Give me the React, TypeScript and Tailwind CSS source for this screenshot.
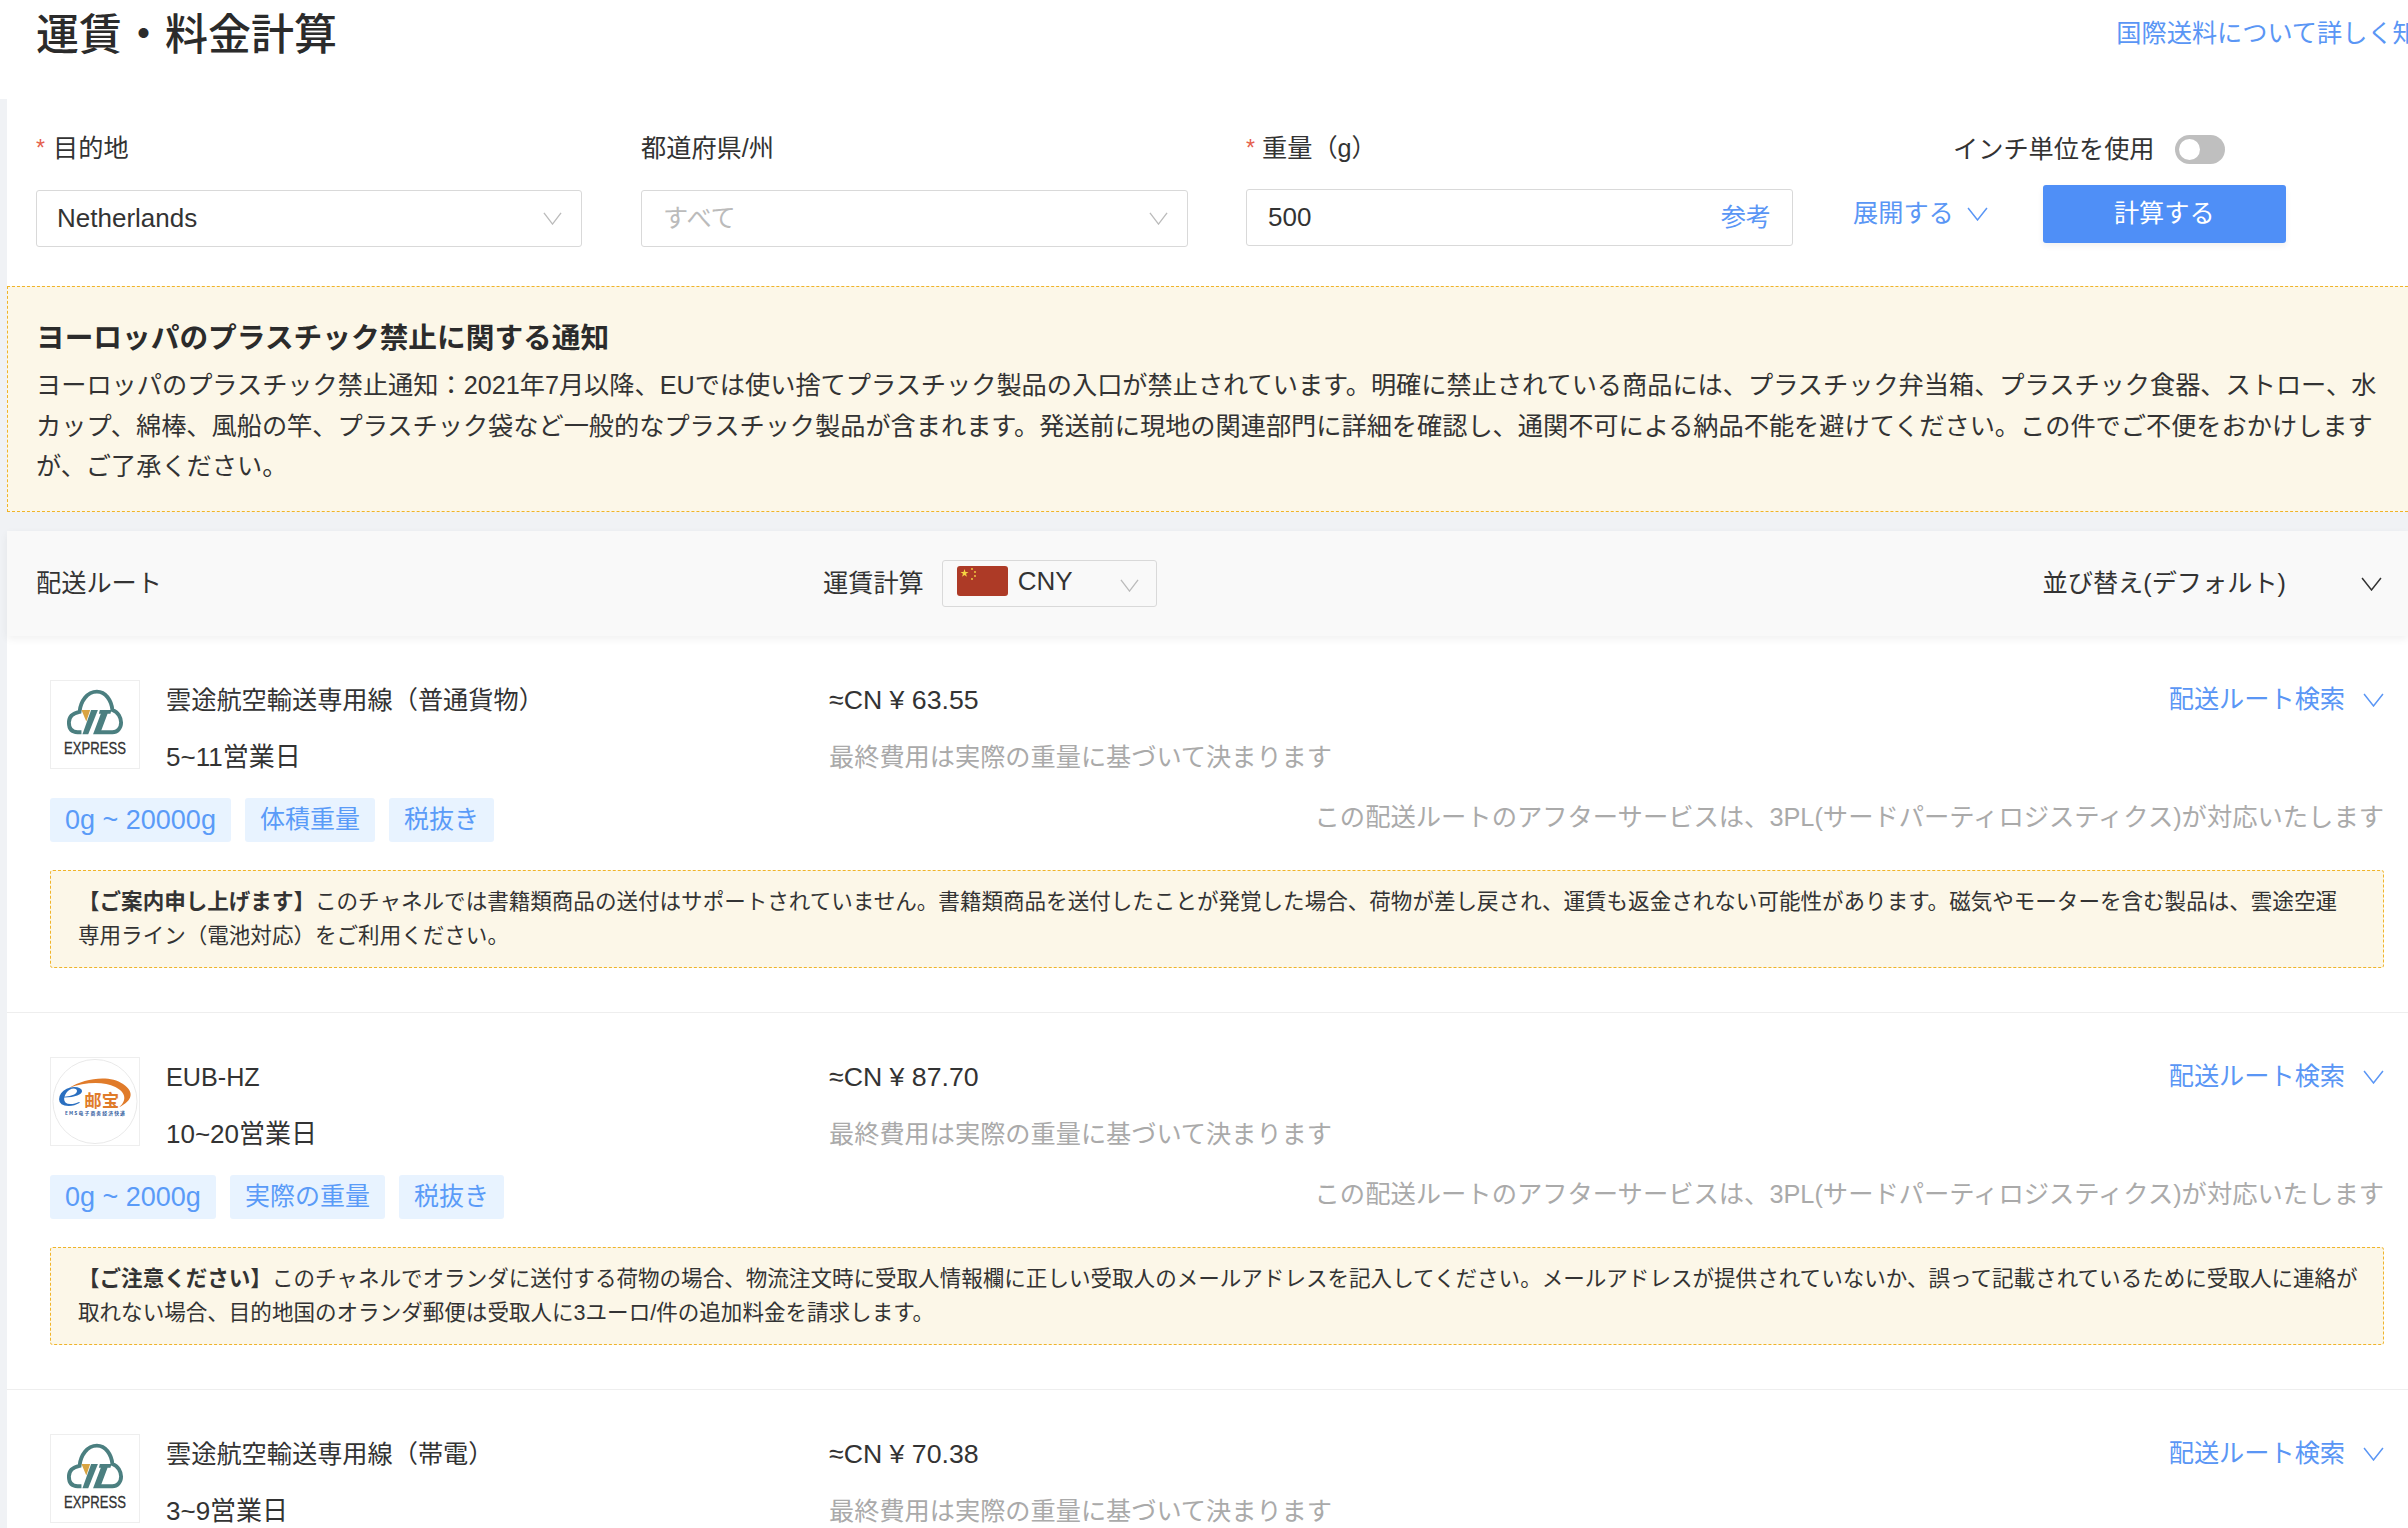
import React from 'react'

function Chevron({ className }: { className: string }) {
  return (
    <svg viewBox="0 0 20 14" fill="none" stroke="currentColor" strokeWidth="1.4" preserveAspectRatio="none" className={className}>
      <path d="M1 1 L10 13 L19 1" />
    </svg>
  )
}

function ExpressLogo() {
  return (
    <svg viewBox="0 0 90 90" className="h-full w-full">
      <path
        d="M31 53 H27 C20 53 18 48 18 43 C18 36 24 33 29 32 C30 21 37 11 47 11 C56 11 62 20 63 30 C69 32 72 38 72 43 C72 49 68 53 63 53 H50"
        fill="none"
        stroke="#4b7f80"
        strokeWidth="4"
      />
      <polygon points="31,30 40,30 36,42" fill="#d9a441" />
      <polygon points="41,30 48,30 38,55 32,55" fill="#4b7f80" />
      <polygon points="50,30 62,30 61,34 58,34 50,55 43,55 51,34 49,34" fill="#4b7f80" />
      <text x="45" y="76" textAnchor="middle" fontSize="17" fill="#333" stroke="#333" strokeWidth="0.3" textLength="64" lengthAdjust="spacingAndGlyphs">
        EXPRESS
      </text>
    </svg>
  )
}

function EubLogo() {
  return (
    <svg viewBox="0 0 90 90" className="h-full w-full">
      <circle cx="45" cy="45" r="43.5" fill="none" stroke="#e8e8e8" />
      <path d="M18 31 C34 21 60 17 74 27 C86 35 84 44 70 51 C79 43 76 35 66 30 C54 24 34 25 18 31 Z" fill="#e07b2a" />
      <text x="6" y="50" fontSize="42" fontStyle="italic" fontFamily="Liberation Serif, serif" fill="#2a6fc0" textLength="27" lengthAdjust="spacingAndGlyphs">
        e
      </text>
      <text x="52" y="51" textAnchor="middle" fontSize="18" fontWeight="700" fill="#e07b2a" fontFamily="Noto Sans CJK SC, sans-serif">
        邮宝
      </text>
      <text x="45" y="59" textAnchor="middle" fontSize="5" fontWeight="700" fill="#34609f" fontFamily="Noto Sans CJK SC, sans-serif" textLength="62">
        EMS电子商务经济快递
      </text>
    </svg>
  )
}

function Flag() {
  return (
    <svg viewBox="0 0 51 30" className="mb-[5px] h-[30px] w-[51px]">
      <rect width="51" height="30" rx="3" fill="#ad3a26" />
      <polygon points="7.5,3 8.5,6 11.5,6 9,7.8 10,10.8 7.5,9 5,10.8 6,7.8 3.5,6 6.5,6" fill="#f5d442" />
      <circle cx="15" cy="3" r="0.9" fill="#f5d442" />
      <circle cx="18" cy="6" r="0.9" fill="#f5d442" />
      <circle cx="18" cy="10" r="0.9" fill="#f5d442" />
      <circle cx="15" cy="13" r="0.9" fill="#f5d442" />
    </svg>
  )
}

const routes = [
  {
    logo: 'express',
    name: '雲途航空輸送専用線（普通貨物）',
    days: '5~11営業日',
    price: '≈CN ¥ 63.55',
    tags: ['0g ~ 20000g', '体積重量', '税抜き'],
    head: '【ご案内申し上げます】',
    line1: 'このチャネルでは書籍類商品の送付はサポートされていません。書籍類商品を送付したことが発覚した場合、荷物が差し戻され、運賃も返金されない可能性があります。磁気やモーターを含む製品は、雲途空運',
    line2: '専用ライン（電池対応）をご利用ください。',
  },
  {
    logo: 'eub',
    name: 'EUB-HZ',
    days: '10~20営業日',
    price: '≈CN ¥ 87.70',
    tags: ['0g ~ 2000g', '実際の重量', '税抜き'],
    head: '【ご注意ください】',
    line1: 'このチャネルでオランダに送付する荷物の場合、物流注文時に受取人情報欄に正しい受取人のメールアドレスを記入してください。メールアドレスが提供されていないか、誤って記載されているために受取人に連絡が',
    line2: '取れない場合、目的地国のオランダ郵便は受取人に3ユーロ/件の追加料金を請求します。',
  },
  {
    logo: 'express',
    name: '雲途航空輸送専用線（帯電）',
    days: '3~9営業日',
    price: '≈CN ¥ 70.38',
    tags: ['0g ~ 20000g', '体積重量', '税抜き'],
    head: '',
    line1: '',
    line2: '',
  },
]

export default function App() {
  return (
    <div className="h-[1528px] w-full overflow-hidden bg-[#f0f2f5] font-['Liberation_Sans','Noto_Sans_CJK_JP',sans-serif] text-[25.2px] text-[#333]">
      {/* Title */}
      <div className="flex h-[99px] items-start justify-between bg-white pl-[36px]">
        <h1 className="mt-[7px] text-[43px] leading-[56px] font-medium text-[#2b2b2b]">運賃・料金計算</h1>
        <a className="mt-[13px] mr-[-35px] shrink-0 whitespace-nowrap leading-[40px] text-[#5a96f5]">国際送料について詳しく知る</a>
      </div>

      <div className="pl-[7px]">
        {/* Search form */}
        <div className="flex h-[187px] bg-white pl-[29px]">
          <div className="w-[546px] pt-[34px]">
            <div className="flex h-[30px] items-center leading-[30px]">
              <span className="mr-[4px] w-[13px] text-[23px] text-[#e5604d]">*</span>目的地
            </div>
            <div className="mt-[27px] flex h-[57px] items-center justify-between rounded-[3px] border border-[#d9d9d9] pr-[19px] pl-[20px] text-[26px]">
              Netherlands
              <Chevron className="h-[13px] w-[19px] text-[#bbb]" />
            </div>
          </div>
          <div className="ml-[59px] w-[547px] pt-[34px]">
            <div className="h-[30px] leading-[30px]">都道府県/州</div>
            <div className="mt-[27px] flex h-[57px] items-center justify-between rounded-[3px] border border-[#d9d9d9] pr-[19px] pl-[21px] text-[#bbb]">
              すべて
              <Chevron className="h-[13px] w-[19px] text-[#bbb]" />
            </div>
          </div>
          <div className="ml-[58px] w-[547px] pt-[34px]">
            <div className="flex h-[30px] items-center leading-[30px]">
              <span className="mr-[3px] w-[13px] text-[23px] text-[#e5604d]">*</span>重量（g）
            </div>
            <div className="mt-[26px] flex h-[57px] items-center justify-between rounded-[3px] border border-[#d9d9d9] pr-[21px] pl-[21px] text-[26px]">
              500
              <span className="text-[25.2px] text-[#5a96f5]">参考</span>
            </div>
          </div>
          <div className="ml-[60px] pt-[36px]">
            <div className="flex h-[29px] items-center pl-[100px]">
              <span>インチ単位を使用</span>
              <span className="ml-[20px] flex h-[29px] w-[50px] items-center rounded-full bg-[#bfbfbf] pl-[4px]">
                <span className="h-[21px] w-[21px] rounded-full bg-white" />
              </span>
            </div>
            <div className="mt-[21px] flex items-center">
              <span className="text-[#5a96f5]">展開する</span>
              <Chevron className="ml-[13px] h-[14px] w-[21px] text-[#5a96f5]" />
              <button className="ml-[55px] h-[58px] w-[243px] rounded-[3px] bg-[#4f8ff7] text-[25.2px] text-white shadow-[0_3px_6px_rgba(0,0,0,0.06)]">
                計算する
              </button>
            </div>
          </div>
        </div>

        {/* Notice */}
        <div className="h-[226px] border border-r-0 border-dashed border-[#f0b429] bg-[#fcf7e8] pt-[31px] pl-[28px] leading-[40.5px]">
          <h2 className="text-[28.7px] leading-[40px] font-bold text-[#2b2b2b]">ヨーロッパのプラスチック禁止に関する通知</h2>
          <p className="mt-[7px] w-[2365px]">
            ヨーロッパのプラスチック禁止通知：2021年7月以降、EUでは使い捨てプラスチック製品の入口が禁止されています。明確に禁止されている商品には、プラスチック弁当箱、プラスチック食器、ストロー、水カップ、綿棒、風船の竿、プラスチック袋など一般的なプラスチック製品が含まれます。発送前に現地の関連部門に詳細を確認し、通関不可による納品不能を避けてください。この件でご不便をおかけしますが、ご了承ください。
          </p>
        </div>

        {/* Route list */}
        <div className="mt-[19px] bg-white">
          <div className="relative flex h-[105px] items-center bg-[#f9f9f9] pr-[26px] pl-[29px] shadow-[0_3px_8px_rgba(0,0,0,0.06)]">
            <span className="w-[787px]">配送ルート</span>
            <span>運賃計算</span>
            <div className="ml-[18px] flex h-[47px] w-[215px] items-center rounded-[3px] border border-[#d9d9d9] pl-[14px]">
              <Flag />
              <span className="mb-[4px] ml-[10px] text-[26px]">CNY</span>
              <Chevron className="mt-[3px] ml-[47px] h-[13px] w-[19px] text-[#bbb]" />
            </div>
            <span className="ml-auto">並び替え(デフォルト)</span>
            <Chevron className="ml-[75px] h-[14px] w-[21px] text-[#333]" />
          </div>

          {routes.map((r, i) => (
            <div key={i} className="border-b border-[#eeeeee] pt-[44px] pr-[24px] pb-[44px] pl-[43px]">
              <div className="flex items-start">
                <div className="h-[89px] w-[90px] shrink-0 border border-[#eeeeee]">
                  {r.logo === 'express' ? <ExpressLogo /> : <EubLogo />}
                </div>
                <div className="ml-[26px] w-[663px] shrink-0 leading-[40px]">
                  <div>{r.name}</div>
                  <div className="mt-[17px] text-[26px]">{r.days}</div>
                </div>
                <div className="flex-1 leading-[40px]">
                  <div className="text-[26.7px]">{r.price}</div>
                  <div className="mt-[17px] text-[#aaa]">最終費用は実際の重量に基づいて決まります</div>
                </div>
                <div className="flex h-[40px] items-center text-[#5a96f5]">
                  配送ルート検索
                  <Chevron className="ml-[18px] h-[14px] w-[21px]" />
                </div>
              </div>

              <div className="mt-[21px] flex items-center justify-between">
                <div className="flex gap-[14px]">
                  {r.tags.map((t) => (
                    <span
                      key={t}
                      className={`flex h-[44px] items-center rounded-[3px] bg-[#e8f3ff] px-[15px] text-[#5a9bf8] ${/\d/.test(t) ? 'text-[27px]' : 'text-[25px]'}`}
                    >
                      {t}
                    </span>
                  ))}
                </div>
                <span className="mb-[5px] text-[25.3px] text-[#aaa]">この配送ルートのアフターサービスは、3PL(サードパーティロジスティクス)が対応いたします</span>
              </div>

              {r.line1 && (
                <div className="mt-[28px] h-[98px] rounded-[3px] border border-dashed border-[#f0b429] bg-[#fcf7e8] px-[27px] pt-[14px] text-[21.55px] leading-[34px] whitespace-nowrap">
                  <b>{r.head}</b>
                  {r.line1}
                  <br />
                  {r.line2}
                </div>
              )}
            </div>
          ))}
        </div>
      </div>
    </div>
  )
}
